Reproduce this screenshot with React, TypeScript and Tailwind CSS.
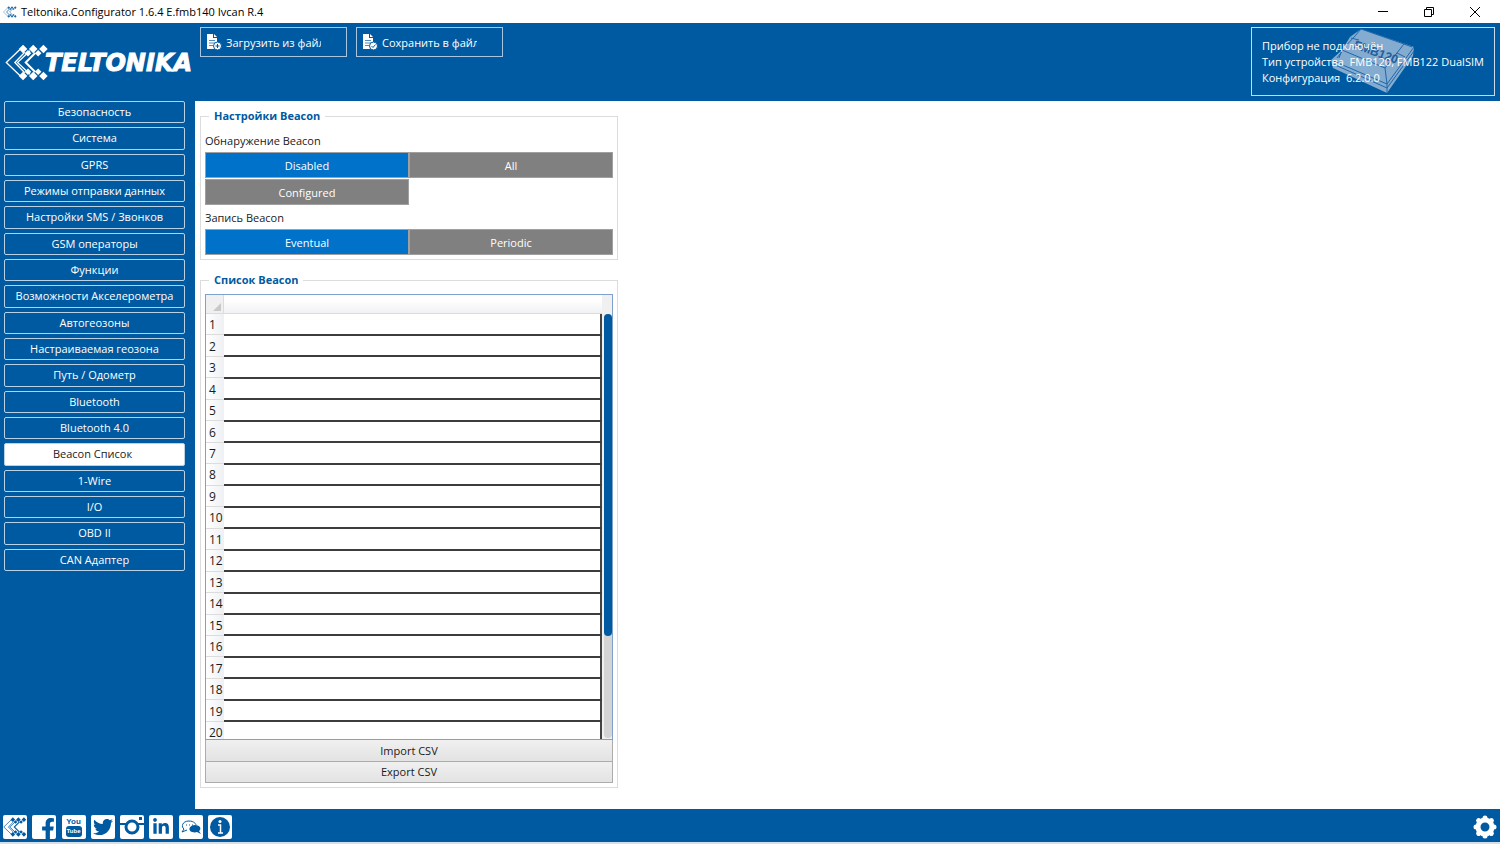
import React, { useState } from 'react';
import { FaFacebookF, FaLinkedinIn, FaTwitter } from 'react-icons/fa';

const menuItems = [
    'Безопасность',
    'Система',
    'GPRS',
    'Режимы отправки данных',
    'Настройки SMS / Звонков',
    'GSM операторы',
    'Функции',
    'Возможности Акселерометра',
    'Автогеозоны',
    'Настраиваемая геозона',
    'Путь / Одометр',
    'Bluetooth',
    'Bluetooth 4.0',
    'Beacon Список',
    '1-Wire',
    'I/O',
    'OBD II',
    'CAN Адаптер',
];

const rows = Array.from({ length: 20 }, (_, i) => i + 1);

// Nested chevrons that end in diamonds
const Mark: React.FC<{ className?: string }> = ({ className }) => (
    <svg viewBox="0 0 134 112" className={className} aria-hidden="true">
        <g fill="none" stroke="currentColor" strokeWidth="4">
            <path d="M50 12 4 56l46 44" />
            <path d="M60 25 30 56l30 31" />
            <path d="M76 20 38 56l38 36" />
            <path d="M92 27 63 56l29 29" strokeWidth="6" />
        </g>
        <g fill="currentColor">
            <path d="m55 2 13 13-13 13-13-13zM86 2l13 13-13 13-13-13zM117 2l13 13-13 13-13-13z" />
            <path d="m70 18 10 10-10 10-10-10zM101 18l10 10-10 10-10-10z" />
            <path d="m55 84 13 13-13 13-13-13zM86 84l13 13-13 13-13-13zM117 84l13 13-13 13-13-13z" />
            <path d="m70 74 10 10-10 10-10-10zM101 74l10 10-10 10-10-10z" />
        </g>
    </svg>
);

const FileIcon: React.FC<{ kind: 'load' | 'save' }> = ({ kind }) => (
    <svg viewBox="0 0 16 16" className="h-4 w-4 shrink-0" aria-hidden="true">
        <path d="M1 0h6v4h4v11H1z" fill="#fff" />
        <path d="M8 0l3 3H8z" fill="#fff" />
        <path d="M3 6.500h6M3 9h6M3 11.500h4" stroke="#4d8cbf" />
        <circle cx="11.500" cy="12" r="4" fill="#fff" stroke="#005aa1" />
        <path d={kind === 'load' ? 'M9.500 12h4M11.500 10v4' : 'm9.500 12 1.500 1.500 2.500-3'} fill="none" stroke="#005aa1" />
    </svg>
);

const Device = () => (
    <svg viewBox="0 0 84 66" className="absolute top-0 left-[79px] h-[66px] w-[84px]" aria-hidden="true">
        <path d="M30 1 83 19 82 28 56 65 2 40 0 32 11 22 19 9z" fill="#84abd0" />
        <g fill="none" stroke="#1f68a9" strokeWidth="1">
            <path d="M0 32 56 56 83 19M2 36l54 24 27-37M56 56v9M30 1l-6 7-13 14 43 18 19-24z" />
            <path d="M11 22 8 30M54 40l2 16M73 16l8 3M20 10l8 2M66 25l8 4M13 21l-7 9" />
        </g>
        <text x="22" y="20" transform="rotate(20 22 20)" fontSize="12" fontWeight="bold" fontFamily="Liberation Sans" fill="#1f5f9c">
            FMB120
        </text>
    </svg>
);

const Instagram = () => (
    <svg viewBox="0 0 24 24" className="h-6 w-6">
        <path d="M0 9h6M18 9h6" stroke="currentColor" strokeWidth="2" />
        <circle cx="12" cy="12" r="6" fill="none" stroke="currentColor" strokeWidth="3" />
        <path d="M19 2h3v3h-3z" fill="currentColor" />
    </svg>
);

const YouTube = () => (
    <span className="flex flex-col items-center font-['Liberation_Sans'] text-[8px] leading-[9px] font-bold">
        <span>You</span>
        <span className="rounded-[3px] bg-[#005aa1] px-px py-px text-[6px] text-white">Tube</span>
    </span>
);

const Chat = () => (
    <svg viewBox="0 0 24 24" className="h-6 w-6">
        <path d="M5 14c-3-2-2-8 5-8 5 0 7 3 7 4M5 14l-2 3 5-2" fill="none" stroke="currentColor" strokeWidth="1" />
        <path d="M7 10h1M10 10h1M13 10h1" stroke="currentColor" />
        <path d="M20 16c3-2 1-6-4-6s-8 5-3 7c2 .6 4 .5 5 0l4 2z" fill="currentColor" />
    </svg>
);

const Info = () => (
    <svg viewBox="0 0 24 24" className="h-6 w-6">
        <circle cx="12" cy="12" r="10" fill="currentColor" />
        <path d="M10 10h2.500v8M10 18h5" fill="none" stroke="#fff" strokeWidth="1.500" />
        <circle cx="12" cy="6.500" r="1.500" fill="#fff" />
    </svg>
);

const Gear = () => (
    <svg viewBox="0 0 24 24" className="h-6 w-6">
        <circle cx="12" cy="12" r="7" fill="none" stroke="#fff" strokeWidth="5" />
        {[0, 45, 90, 135, 180, 225, 270, 315].map((a) => (
            <circle key={a} cx="12" cy="3" r="2.500" fill="#fff" transform={`rotate(${a} 12 12)`} />
        ))}
    </svg>
);

const links = [
    { name: 'Teltonika', icon: <Mark className="h-5 w-6" /> },
    { name: 'Facebook', icon: <FaFacebookF className="mt-1 ml-2 h-[22px] w-[22px]" /> },
    { name: 'YouTube', icon: <YouTube /> },
    { name: 'Twitter', icon: <FaTwitter className="h-5 w-5" /> },
    { name: 'Instagram', icon: <Instagram /> },
    { name: 'LinkedIn', icon: <FaLinkedinIn className="h-[18px] w-[18px]" /> },
    { name: 'Forum', icon: <Chat /> },
    { name: 'Info', icon: <Info /> },
];

interface OptionGroupProps {
    label: string;
    options: string[];
    initial: string;
}

const OptionGroup: React.FC<OptionGroupProps> = ({ label, options, initial }) => {
    const [value, setValue] = useState(initial);

    return (
        <div role="group" aria-label={label}>
            <p className="h-[22px] leading-[22px]">{label}</p>
            <div className="grid grid-cols-2 gap-y-px">
                {options.map((option) => (
                    <button
                        key={option}
                        type="button"
                        aria-pressed={value === option}
                        onClick={() => setValue(option)}
                        className={`h-[26px] border border-[#a0a0a0] pt-px text-white ${value === option ? 'bg-[#0072c9]' : 'bg-[#808080]'}`}
                    >
                        {option}
                    </button>
                ))}
            </div>
        </div>
    );
};

const App = () => {
    const [active, setActive] = useState('Beacon Список');

    return (
        <div className="flex min-h-screen flex-col bg-[#005aa1] font-['Open_Sans','Noto_Sans',sans-serif] text-[11px] leading-[16px] text-[#1a1a1a]">
            {/* Title bar */}
            <div className="flex h-[23px] items-center justify-between bg-white pr-[2px] pl-[3px] text-black">
                <div className="flex items-center gap-1">
                    <Mark className="h-3 w-[14px] text-[#1f68a9]" />
                    <span>Teltonika.Configurator 1.6.4 E.fmb140 Ivcan R.4</span>
                </div>
                <div className="flex">
                    <button type="button" aria-label="Minimize" className="flex w-[46px] justify-center">
                        <svg viewBox="0 0 10 10" className="h-[10px] w-[10px]"><path d="M0 4.500h10" stroke="#000" /></svg>
                    </button>
                    <button type="button" aria-label="Restore" className="flex w-[46px] justify-center">
                        <svg viewBox="0 0 10 10" className="h-[10px] w-[10px]">
                            <path d="M.5 2.500h7v7h-7zM2.500 2.500v-2h7v7h-2" fill="none" stroke="#000" />
                        </svg>
                    </button>
                    <button type="button" aria-label="Close" className="flex w-[46px] justify-center">
                        <svg viewBox="0 0 10 10" className="h-[10px] w-[10px]"><path d="m0 0 10 10M10 0 0 10" stroke="#000" /></svg>
                    </button>
                </div>
            </div>

            {/* Header */}
            <header className="flex h-[78px] text-white">
                <div className="flex w-[200px] shrink-0 items-center pl-[5px]">
                    <Mark className="h-[37px] w-11 shrink-0" />
                    <span className="-ml-1 pt-[2px] font-['DejaVu_Sans'] text-[24px] leading-[24px] font-bold italic [-webkit-text-stroke:1px_white]">TELTONIKA</span>
                </div>
                <div className="flex flex-1 items-start gap-[9px] pt-1">
                    <button type="button" className="flex h-[30px] w-[147px] items-center gap-1 border border-[#a9c6de] pl-[5px] text-left">
                        <FileIcon kind="load" />
                        <span className="w-[95px] overflow-hidden pt-px whitespace-nowrap">Загрузить из файла</span>
                    </button>
                    <button type="button" className="flex h-[30px] w-[147px] items-center gap-1 border border-[#a9c6de] pl-[5px] text-left">
                        <FileIcon kind="save" />
                        <span className="w-[95px] overflow-hidden pt-px whitespace-nowrap">Сохранить в файл</span>
                    </button>
                </div>
                <div className="relative mt-1 mr-[5px] h-[69px] w-[244px] border border-[#c9dbea] py-[10px] pl-[10px] whitespace-nowrap">
                    <Device />
                    <div className="relative">
                        <p>Прибор не подключён</p>
                        <p>Тип устройства&nbsp; FMB120, FMB122 DualSIM</p>
                        <p>Конфигурация&nbsp; 6.2.0.0</p>
                    </div>
                </div>
            </header>

            <div className="flex flex-1">
                {/* Sidebar */}
                <nav className="w-[195px] shrink-0 pr-[10px] pl-1 text-white">
                    <div className="grid h-[470px] auto-rows-fr gap-1">
                        {menuItems.map((item) => (
                            <button
                                key={item}
                                type="button"
                                onClick={() => setActive(item)}
                                className={`rounded-[2px] border border-[#b9d1e5] leading-[18px] whitespace-nowrap ${active === item ? 'bg-white pr-1 text-[#1a1a1a]' : ''}`}
                            >
                                {item}
                            </button>
                        ))}
                    </div>
                </nav>

                {/* Content */}
                <main className="flex-1 bg-white px-[5px] pt-[7px]">
                    <fieldset className="w-[418px] border border-[#dcdcdc] px-1 pb-1">
                        <legend className="ml-1 px-[5px] font-bold text-[#005aa1]">Настройки Beacon</legend>
                        <div className="flex flex-col gap-[2px] pt-[6px]">
                            <OptionGroup label="Обнаружение Beacon" options={['Disabled', 'All', 'Configured']} initial="Disabled" />
                            <OptionGroup label="Запись Beacon" options={['Eventual', 'Periodic']} initial="Eventual" />
                        </div>
                    </fieldset>

                    <fieldset className="mt-3 w-[418px] border border-[#dcdcdc] px-1 pb-1">
                        <legend className="ml-1 px-[5px] font-bold text-[#005aa1]">Список Beacon</legend>
                        <div className="mt-[6px] flex h-[446px] overflow-hidden border border-[#7da2ce]">
                            <div className="flex-1 overflow-hidden">
                                <div className="flex h-[19px] border-b border-[#dcdcdc] bg-linear-to-b from-white from-30% to-[#f0f1f3]">
                                    <div className="flex w-[18px] items-end justify-end border-r border-[#dcdcdc] bg-[#f0f0f0] pr-[2px] pb-[2px]">
                                        <svg viewBox="0 0 8 8" className="h-2 w-2"><path d="M8 0v8H0z" fill="#c8c8c8" /></svg>
                                    </div>
                                </div>
                                <table className="h-[430px] w-full border-collapse border-r-2 border-[#444444]">
                                    <tbody>
                                        {rows.map((row) => (
                                            <tr key={row}>
                                                <th scope="row" className="w-[18px] border-b border-[#dcdcdc] bg-linear-to-r from-white to-[#eef0f3] p-0 pt-[2px] pl-[3px] text-left text-[12px] font-normal">
                                                    {row}
                                                </th>
                                                <td className="border-b-2 border-[#3c3c3c] p-0" />
                                            </tr>
                                        ))}
                                    </tbody>
                                </table>
                            </div>
                            <div className="w-[10px] bg-[#f0f0f0] pt-[19px] pl-[2px]">
                                <div className="h-[424px] rounded bg-[#d4d4d4]">
                                    <div className="h-[322px] rounded bg-[#005aa1]" />
                                </div>
                            </div>
                        </div>
                        <button type="button" className="block h-[22px] w-full border border-t-0 border-[#acacac] bg-linear-to-b from-[#f0f0f0] to-[#e3e3e3]">
                            Import CSV
                        </button>
                        <button type="button" className="block h-[21px] w-full border border-t-0 border-[#acacac] bg-linear-to-b from-[#f0f0f0] to-[#e3e3e3]">
                            Export CSV
                        </button>
                    </fieldset>
                </main>
            </div>

            {/* Footer */}
            <footer className="flex h-[35px] items-center justify-between border-b-2 border-[#d5dfea] pt-[3px] pr-[3px] pl-[3px]">
                <div className="flex w-[229px] justify-between">
                    {links.map((link) => (
                        <a
                            key={link.name}
                            href="#"
                            aria-label={link.name}
                            className="flex h-6 w-6 items-center justify-center overflow-hidden rounded-[2px] bg-white text-[#005aa1]"
                        >
                            {link.icon}
                        </a>
                    ))}
                </div>
                <button type="button" aria-label="Settings"><Gear /></button>
            </footer>
        </div>
    );
};

export default App;
